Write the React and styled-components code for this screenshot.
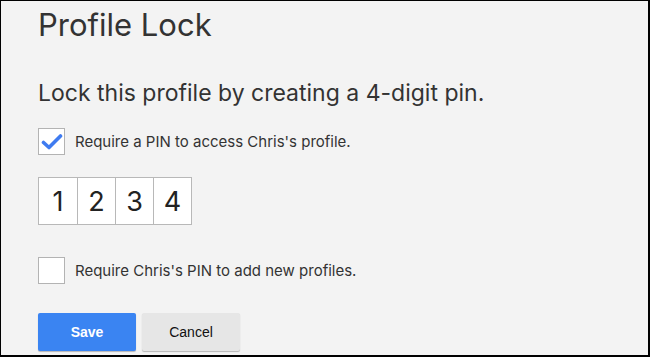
import styled, { createGlobalStyle } from "styled-components";

const GlobalStyle = createGlobalStyle`
    html, body {
        margin: 0;
        padding: 0;
        background: #f3f3f3;
    }
`;

//!styles----------------------------------------------
const Frame = styled.div`
    box-sizing: border-box;
    width: 650px;
    height: 357px;
    overflow: hidden;
    background: #f3f3f3;
    border: 2px solid #000;
    border-top-width: 1px;
    border-left-width: 1px;
    padding: 4px 0 0 37px;
    font-family: Inter, "Noto Sans", sans-serif;
    color: #333;
`;

const Title = styled.h1`
    margin: 0;
    font-size: 31px;
    font-weight: 400;
    line-height: 40px;
`;

const Subtitle = styled.h2`
    margin: 32px 0 0;
    font-size: 23px;
    font-weight: 400;
    line-height: 32px;
`;

const CheckRow = styled.label`
    display: flex;
    align-items: center;
    gap: 10px;
    margin-top: ${(p) => p.$top}px;
    font-size: 15px;
`;

const Box = styled.span`
    box-sizing: border-box;
    display: flex;
    align-items: center;
    justify-content: center;
    width: 27px;
    height: 27px;
    background: #fff;
    border: 1px solid #b3b3b3;
`;

const PinGroup = styled.div`
    display: flex;
    width: fit-content;
    margin-top: 22px;
    border: 1px solid #b8b8b8;
    background: #fff;
`;

const PinCell = styled.div`
    box-sizing: border-box;
    width: 38px;
    height: 46px;
    display: flex;
    align-items: center;
    justify-content: center;
    font-size: 27px;
    color: #222;
    & + & {
        border-left: 1px solid #b8b8b8;
    }
`;

const Buttons = styled.div`
    display: flex;
    gap: 6px;
    margin-top: 29px;
`;

const Button = styled.button`
    width: 98px;
    height: 38px;
    border: none;
    border-radius: 2px;
    font-family: "Liberation Sans", Arial, sans-serif;
    font-size: 14px;
    font-weight: ${(p) => (p.$primary ? 700 : 400)};
    color: ${(p) => (p.$primary ? "#fff" : "#111")};
    background: ${(p) => (p.$primary ? "#3a84f2" : "#e6e6e6")};
    box-shadow: 0 1px 1px rgba(0, 0, 0, 0.25);
`;

const Check = () => (
    <svg width="22" height="18" viewBox="0 0 22 18">
        <path
            d="M2.5 9.5 L8 14.5 L19.5 3"
            fill="none"
            stroke="#3f7bf0"
            strokeWidth="3.6"
            strokeLinecap="round"
            strokeLinejoin="round"
        />
    </svg>
);

const App = () => {
    return (
        <Frame>
            <GlobalStyle />
            <Title>Profile Lock</Title>
            <Subtitle>Lock this profile by creating a 4-digit pin.</Subtitle>
            <CheckRow $top={19}>
                <Box>
                    <Check />
                </Box>
                Require a PIN to access Chris's profile.
            </CheckRow>
            <PinGroup>
                {["1", "2", "3", "4"].map((d) => (
                    <PinCell key={d}>{d}</PinCell>
                ))}
            </PinGroup>
            <CheckRow $top={32}>
                <Box />
                Require Chris's PIN to add new profiles.
            </CheckRow>
            <Buttons>
                <Button $primary>Save</Button>
                <Button>Cancel</Button>
            </Buttons>
        </Frame>
    );
};

export default App;
